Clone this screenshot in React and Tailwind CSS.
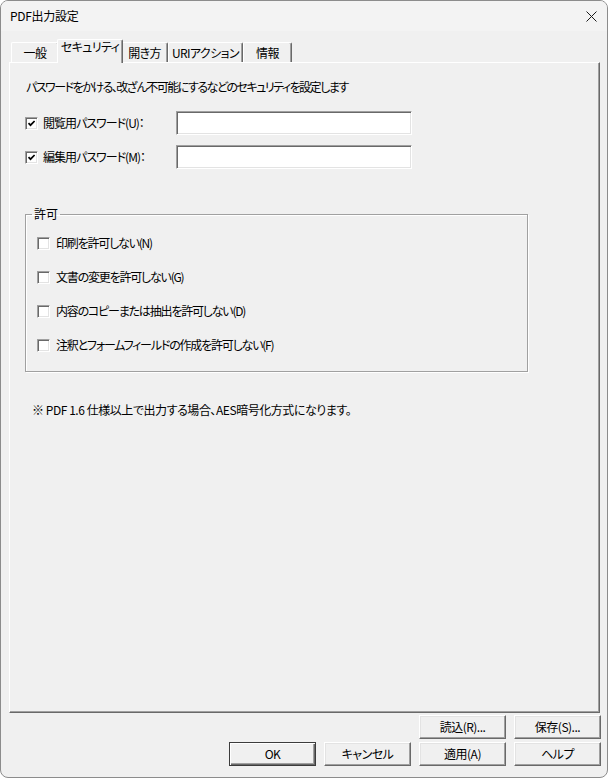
import React from 'react'

const font = "font-['Noto_Sans_CJK_JP','Noto_Sans',sans-serif] [font-feature-settings:'palt']"

function CheckBox({ checked }) {
  return (
    <span className="w-[13px] h-[13px] shrink-0 bg-white border border-t-[#a0a0a0] border-l-[#a0a0a0] border-r-white border-b-white shadow-[inset_1px_1px_0_#696969,inset_-1px_-1px_0_#e3e3e3] flex items-center justify-center">
      {checked && (
        <svg width="9" height="9" viewBox="0 0 9 9">
          <path d="M1.5 4.2 L3.5 6.2 L7.6 2" stroke="#000" strokeWidth="1.7" fill="none" />
        </svg>
      )}
    </span>
  )
}

function Tab({ label, w, active }) {
  if (active) {
    return (
      <div
        className="relative z-10 -mx-[2px] mb-[-1px] h-[24px] bg-[#f0f0f0] border-t border-l border-r border-t-white border-l-white border-r-[#696969] shadow-[inset_-1px_0_0_#a0a0a0] rounded-t-[2px] flex justify-center leading-[14px] tracking-[-0.6px]"
        style={{ width: w + 4 }}
      >
        {label}
      </div>
    )
  }
  return (
    <div
      className="h-[20px] border-t border-l border-r border-t-white border-l-white border-r-[#696969] shadow-[inset_-1px_0_0_#a0a0a0] rounded-t-[2px] flex justify-center leading-[16px] pt-[2px] tracking-[-0.6px]"
      style={{ width: w }}
    >
      {label}
    </div>
  )
}

function Button({ children, primary }) {
  return (
    <button
      className={
        primary
          ? 'w-[87px] h-[24px] flex items-center justify-center bg-[#f0f0f0] tracking-[-0.5px] border border-[#3c3c3c] shadow-[inset_1px_1px_0_#fff,inset_-1px_-1px_0_#696969,inset_-2px_-2px_0_#a0a0a0]'
          : 'w-[87px] h-[24px] flex items-center justify-center bg-[#f0f0f0] tracking-[-0.5px] border border-t-white border-l-white border-r-[#696969] border-b-[#696969] shadow-[inset_-1px_-1px_0_#a0a0a0,inset_1px_1px_0_#e3e3e3]'
      }
    >
      {children}
    </button>
  )
}

function PasswordRow({ label, className }) {
  return (
    <div className={`flex items-center ml-[15px] ${className}`}>
      <CheckBox checked />
      <span className="ml-[5px] w-[133px] tracking-[-1px]">{label}</span>
      <div className="w-[236px] h-[24px] bg-white border border-t-[#a0a0a0] border-l-[#a0a0a0] border-r-white border-b-white shadow-[inset_1px_1px_0_#696969,inset_-1px_-1px_0_#e3e3e3]" />
    </div>
  )
}

const permissions = [
  '印刷を許可しない(N)',
  '文書の変更を許可しない(G)',
  '内容のコピーまたは抽出を許可しない(D)',
  '注釈とフォームフィールドの作成を許可しない(F)',
]

export default function App() {
  return (
    <div className={`w-[608px] h-[778px] bg-[#f0f0f0] border border-[#8c8c8c] rounded-[8px] overflow-hidden flex flex-col text-[12px] text-black ${font}`}>
      {/* title bar */}
      <div className="h-[30px] shrink-0 bg-[#f3f3f3] flex items-center justify-between pl-[9px] pr-[10px]">
        <span className="leading-[16px] tracking-[-0.3px]">PDF出力設定</span>
        <svg width="11" height="11" viewBox="0 0 11 11">
          <path d="M0.5 0.5 L10.5 10.5 M10.5 0.5 L0.5 10.5" stroke="#1a1a1a" strokeWidth="1" />
        </svg>
      </div>

      {/* tabs */}
      <div className="mt-[8px] h-[23px] shrink-0 ml-[10px] flex items-end">
        <Tab label="一般" w={48} />
        <Tab label="セキュリティ" w={62} active />
        <Tab label="開き方" w={47} />
        <Tab label="URIアクション" w={75} />
        <Tab label="情報" w={49} />
      </div>

      {/* panel */}
      <div className="flex-1 ml-[8px] mr-[7px] border border-t-white border-l-white border-r-[#696969] border-b-[#696969] shadow-[inset_-1px_-1px_0_#a0a0a0] flex flex-col leading-[16px]">
        <p className="mt-[16px] pl-[16px] tracking-[-1.5px]">パスワードをかける、改ざん不可能にするなどのセキュリティを設定します</p>
        <PasswordRow label="閲覧用パスワード(U)：" className="mt-[16px]" />
        <PasswordRow label="編集用パスワード(M)：" className="mt-[10px]" />

        <fieldset className="mt-[37px] ml-[15px] w-[503px] border border-[#a0a0a0] shadow-[inset_1px_1px_0_#fff,1px_1px_0_#fff] pb-[16px]">
          <legend className="ml-[6px] px-[2px] leading-[16px]">許可</legend>
          {permissions.map((p, i) => (
            <div key={p} className={`flex items-center h-[20px] pl-[11px] ${i === 0 ? 'mt-[11px]' : 'mt-[14px]'}`}>
              <CheckBox />
              <span className="ml-[6px] tracking-[-1.2px]">{p}</span>
            </div>
          ))}
        </fieldset>

        <p className="mt-[30px] pl-[22px] tracking-[-0.45px]">※ PDF 1.6 仕様以上で出力する場合、AES暗号化方式になります。</p>
      </div>

      {/* buttons */}
      <div className="shrink-0 flex flex-col items-end gap-[3px] pt-[2px] pb-[11px] pr-[6px]">
        <div className="flex gap-[8px]">
          <Button>読込(R)...</Button>
          <Button>保存(S)...</Button>
        </div>
        <div className="flex gap-[8px]">
          <Button primary>OK</Button>
          <Button>キャンセル</Button>
          <Button>適用(A)</Button>
          <Button>ヘルプ</Button>
        </div>
      </div>
    </div>
  )
}
